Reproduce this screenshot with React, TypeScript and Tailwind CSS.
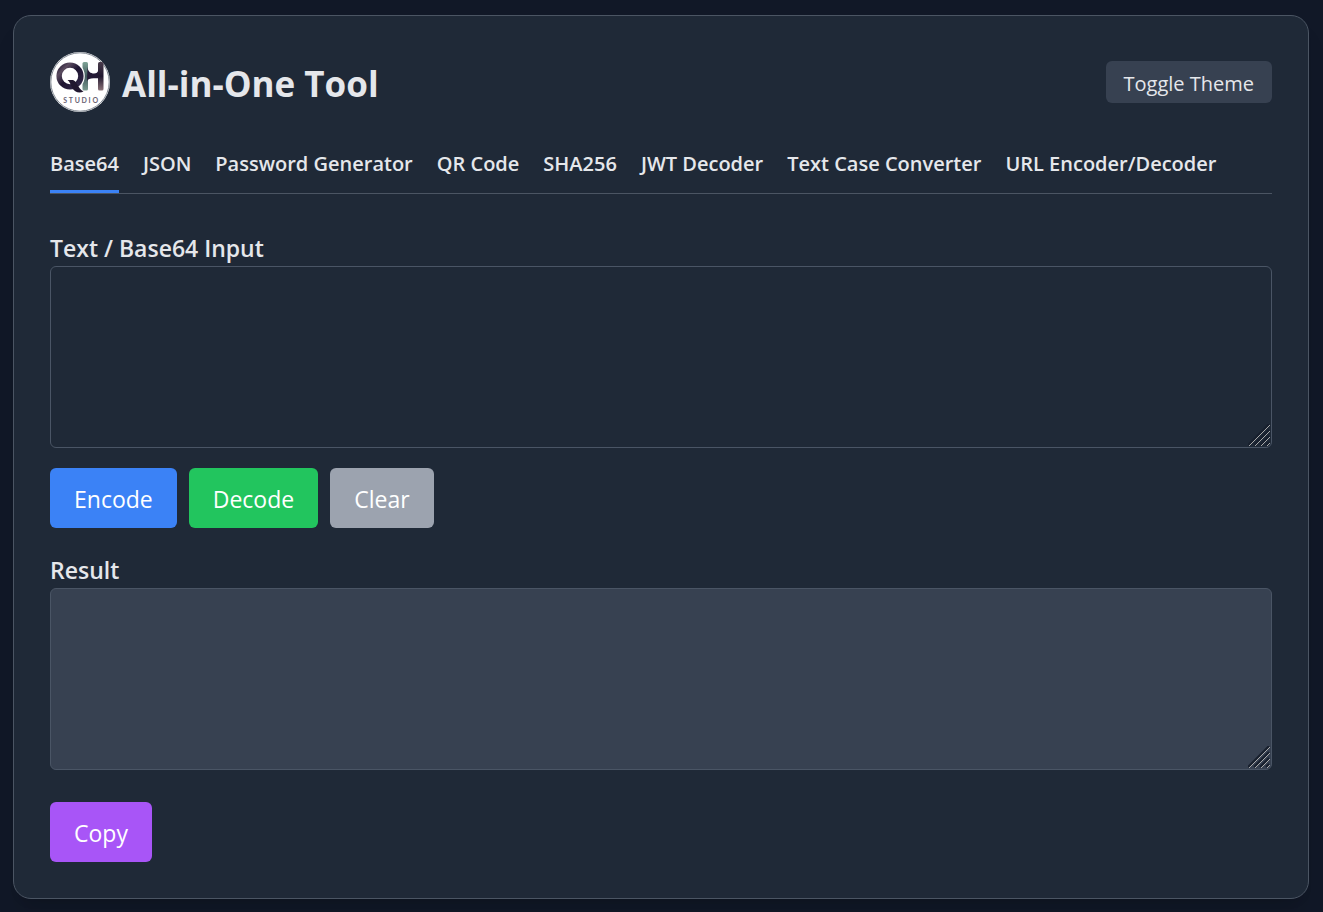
import { useState } from "react";
import clsx from "clsx";

const TABS = [
  "Base64",
  "JSON",
  "Password Generator",
  "QR Code",
  "SHA256",
  "JWT Decoder",
  "Text Case Converter",
  "URL Encoder/Decoder",
];

const Logo = () => (
  <svg viewBox="0 0 60 60" className="h-[60px] w-[60px] shrink-0" role="img" aria-label="QH Studio">
    <defs>
      <linearGradient id="ring" x1="0" y1="0" x2="1" y2="1">
        <stop offset="0" stopColor="#2a2038" />
        <stop offset="0.2" stopColor="#5b4c60" />
        <stop offset="0.5" stopColor="#1d1430" />
        <stop offset="1" stopColor="#33294a" />
      </linearGradient>
      <linearGradient id="stem-left" x1="0" y1="0" x2="0" y2="1">
        <stop offset="0" stopColor="#7fa496" />
        <stop offset="0.5" stopColor="#41585c" />
        <stop offset="1" stopColor="#7b9b90" />
      </linearGradient>
      <linearGradient id="stem-right" x1="0" y1="0" x2="0" y2="1">
        <stop offset="0" stopColor="#4a3c4c" />
        <stop offset="0.5" stopColor="#20172e" />
        <stop offset="1" stopColor="#8b7379" />
      </linearGradient>
    </defs>
    <circle cx="30" cy="30" r="30" fill="#fff" />
    <circle cx="30" cy="30" r="29.2" fill="none" stroke="#4b5563" strokeWidth="0.7" />
    <rect x="32.5" y="10" width="5.5" height="28.5" rx="1.5" fill="url(#stem-left)" />
    <rect x="48" y="10" width="5.5" height="28.5" rx="1.5" fill="url(#stem-right)" />
    <path d="M37.5 15c.5 4.500 3 6.500 6.500 6.500 2.500 0 3.700-1 4.200-3v7.800h-4.700c-3.500 0-5.500.7-6.500 3z" fill="#241a35" />
    <circle cx="20" cy="24" r="12.800" fill="none" stroke="#fff" strokeWidth="4" />
    <circle cx="20" cy="24" r="10.900" fill="none" stroke="url(#ring)" strokeWidth="5.400" />
    <path d="M17.500 28h5.500c4 1 5 9 10.500 11.500-4.500 2.500-9 .5-11.500-4-1.500-3-2-5.500-4.500-7.500z" fill="#21172f" />
    <text
      x="31.5"
      y="51"
      textAnchor="middle"
      fontFamily="Lato, sans-serif"
      fontSize="7"
      fontWeight="700"
      letterSpacing="1.7"
      fill="#6a6374"
    >
      STUDIO
    </text>
  </svg>
);

type TextBoxProps = {
  id: string;
  label: string;
  value: string;
  readOnly?: boolean;
  onChange?: (value: string) => void;
};

const TextBox = ({ id, label, value, readOnly, onChange }: TextBoxProps) => (
  <div>
    <label htmlFor={id} className="block pt-0.5 pb-0.5 text-[23px] leading-8 font-semibold">
      {label}
    </label>
    <div className="relative">
      <textarea
        id={id}
        value={value}
        readOnly={readOnly}
        onChange={(e) => onChange?.(e.target.value)}
        className={clsx(
          "block h-[182px] w-full resize-none rounded-md border border-gray-600 p-3 text-[23px] outline-none",
          readOnly ? "bg-[#374151]" : "bg-[#1f2937]"
        )}
      />
      <svg
        viewBox="0 0 22 22"
        className="pointer-events-none absolute right-0.5 bottom-0.5 h-[22px] w-[22px]"
        aria-hidden="true"
      >
        <path d="M0 21L21 0M6 21L21 6M12 21L21 12M18 21L21 18" stroke="#18202e" strokeWidth="2" />
        <path d="M1 22L22 1M7 22L22 7M13 22L22 13M19 22L22 19" stroke="#a8a8a8" strokeWidth="1" />
      </svg>
    </div>
  </div>
);

type ActionButtonProps = {
  className: string;
  onClick: () => void;
  children: string;
};

const ActionButton = ({ className, onClick, children }: ActionButtonProps) => (
  <button
    type="button"
    onClick={onClick}
    className={clsx("rounded-md px-6 pt-3.5 pb-3 text-[23px] leading-[34px] text-white", className)}
  >
    {children}
  </button>
);

export default function App() {
  const [activeTab, setActiveTab] = useState("Base64");
  const [dark, setDark] = useState(true);
  const [input, setInput] = useState("");
  const [result, setResult] = useState("");

  const encode = () => setResult(btoa(unescape(encodeURIComponent(input))));

  const decode = () => {
    try {
      setResult(decodeURIComponent(escape(atob(input))));
    } catch {
      setResult("");
    }
  };

  const clear = () => {
    setInput("");
    setResult("");
  };

  return (
    <div
      className={clsx(
        "min-h-screen py-[15px] pr-[14px] pl-[13px] font-['Open_Sans','Noto_Sans',sans-serif] text-gray-200",
        dark ? "bg-[#111827]" : "bg-gray-500"
      )}
    >
      <main className="rounded-[18px] border border-[#4b5563] bg-[#1f2937] p-9 shadow-xl">
        <header className="flex items-center justify-between">
          <div className="flex items-center gap-3">
            <Logo />
            <h1 className="pt-1 text-[35px] leading-[48px] font-bold">All-in-One Tool</h1>
          </div>
          <button
            type="button"
            onClick={() => setDark(!dark)}
            className="rounded-md bg-[#374151] px-[18px] pt-2 pb-1 text-[20px] leading-[30px]"
          >
            Toggle Theme
          </button>
        </header>

        <nav className="mt-9 flex gap-6 border-b border-[#4b5563]">
          {TABS.map((tab) => (
            <button
              key={tab}
              type="button"
              onClick={() => setActiveTab(tab)}
              className={clsx(
                "border-b-[3px] pt-0.5 pb-3 text-[20px] leading-7 font-semibold whitespace-nowrap",
                tab === activeTab ? "border-[#3b82f6]" : "border-transparent"
              )}
            >
              {tab}
            </button>
          ))}
        </nav>

        <section className="mt-9">
          <TextBox id="input" label="Text / Base64 Input" value={input} onChange={setInput} />
          <div className="mt-5 mb-6 flex gap-3">
            <ActionButton className="bg-[#3b82f6]" onClick={encode}>
              Encode
            </ActionButton>
            <ActionButton className="bg-[#22c55e]" onClick={decode}>
              Decode
            </ActionButton>
            <ActionButton className="bg-[#9ca3af]" onClick={clear}>
              Clear
            </ActionButton>
          </div>
          <TextBox id="result" label="Result" value={result} readOnly />
          <div className="mt-8">
            <ActionButton className="bg-[#a855f7]" onClick={() => navigator.clipboard.writeText(result)}>
              Copy
            </ActionButton>
          </div>
        </section>
      </main>
    </div>
  );
}
